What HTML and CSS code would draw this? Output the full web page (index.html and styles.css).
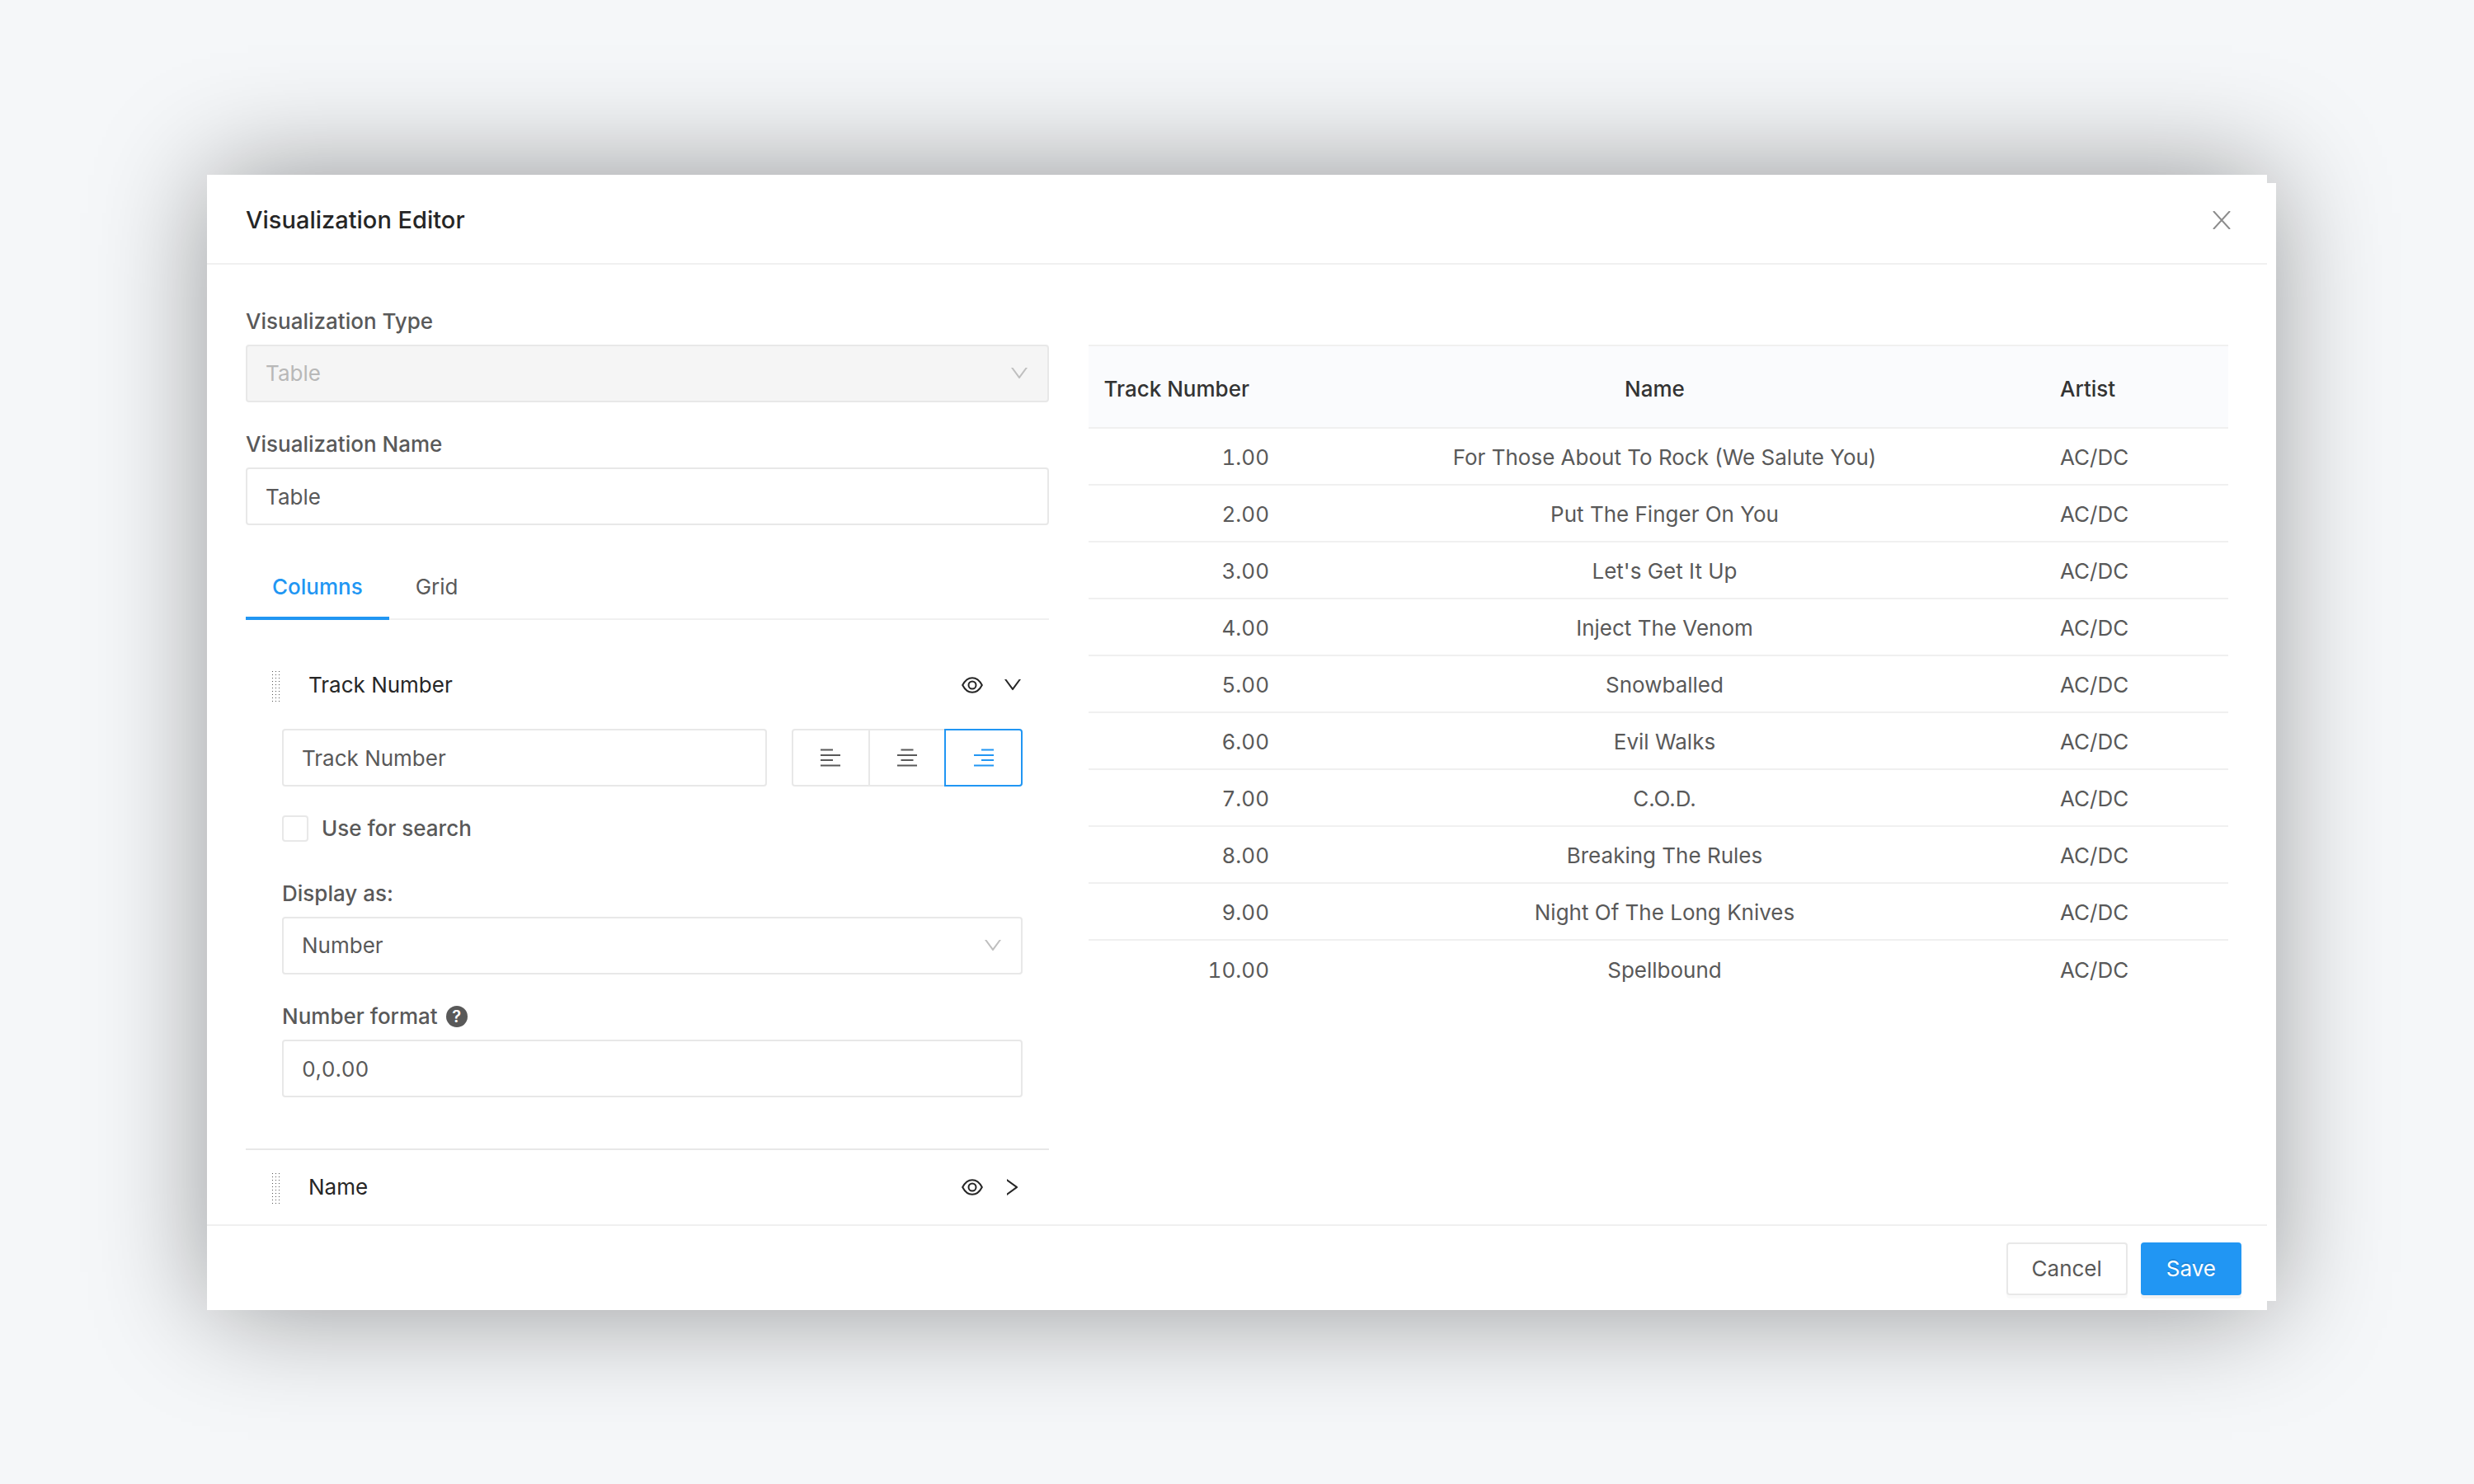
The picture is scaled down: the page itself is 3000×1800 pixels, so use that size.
FILE: index.html
```html
<!DOCTYPE html>
<html lang="en">
<head>
<meta charset="utf-8">
<title>Visualization Editor</title>
<link rel="stylesheet" href="styles.css">
</head>
<body>
<svg class="sprite" aria-hidden="true">
  <symbol id="i-eye" viewBox="0 0 26 20"><path d="M1.200 10C4.200 4.200 8.300 1.200 13 1.200S21.800 4.200 24.800 10C21.800 15.800 17.700 18.800 13 18.800S4.200 15.800 1.200 10Z" fill="none" stroke="currentColor" stroke-width="2"/><circle cx="13" cy="10" r="4.500" fill="none" stroke="currentColor" stroke-width="2"/></symbol>
  <symbol id="i-down" viewBox="0 0 20 14"><path d="M0 0H2.400L10 10.300L17.600 0H20L10.700 12.800Q10 13.600 9.300 12.800Z" fill="currentColor"/></symbol>
  <symbol id="i-right" viewBox="0 0 14 20"><path d="M0 0V2.400L10.300 10L0 17.600V20L12.800 10.700Q13.600 10 12.800 9.300Z" fill="currentColor"/></symbol>
  <symbol id="i-close" viewBox="0 0 22 22"><path d="M1 0L21 22M21 0L1 22" fill="none" stroke="currentColor" stroke-width="2"/></symbol>
</svg>
<main class="modal" role="dialog" aria-labelledby="title">
  <header class="modal-header">
    <h1 id="title">Visualization Editor</h1>
    <button class="icon-button close" aria-label="Close"><svg width="22" height="22"><use href="#i-close"/></svg></button>
  </header>
  <div class="modal-body">
    <form class="settings">
      <div class="field">
        <label for="vtype">Visualization Type</label>
        <div class="select"><select id="vtype" disabled><option>Table</option></select><svg width="20" height="14"><use href="#i-down"/></svg></div>
      </div>
      <div class="field">
        <label for="vname">Visualization Name</label>
        <input class="text" id="vname" type="text" value="Table">
      </div>
      <div class="tabs" role="tablist">
        <button type="button" class="tab active" role="tab" aria-selected="true">Columns</button>
        <button type="button" class="tab" role="tab" aria-selected="false">Grid</button>
      </div>
      <section class="column">
        <div class="column-header">
          <span class="drag"></span>
          <span class="column-name">Track Number</span>
          <button type="button" class="icon-button" aria-label="Toggle visibility"><svg width="26" height="20"><use href="#i-eye"/></svg></button>
          <button type="button" class="icon-button arrow" aria-label="Collapse"><svg width="20" height="14"><use href="#i-down"/></svg></button>
        </div>
        <div class="column-content">
          <div class="title-row">
            <input class="text" type="text" value="Track Number" aria-label="Column title">
            <div class="align-group">
              <button type="button" aria-label="Align left"><svg width="24" height="22" viewBox="0 0 24 22"><path d="M0 1.500H15M0 8H24M0 14H15M0 20.500H24"/></svg></button>
              <button type="button" aria-label="Align center"><svg width="24" height="22" viewBox="0 0 24 22"><path d="M4.500 1.500H19.500M0 8H24M4.500 14H19.500M0 20.500H24"/></svg></button>
              <button type="button" class="active" aria-label="Align right"><svg width="24" height="22" viewBox="0 0 24 22"><path d="M9 1.500H24M0 8H24M9 14H24M0 20.500H24"/></svg></button>
            </div>
          </div>
          <label class="check"><input type="checkbox">Use for search</label>
          <div class="field">
            <label for="display">Display as:</label>
            <div class="select"><select id="display"><option>Number</option></select><svg width="20" height="14"><use href="#i-down"/></svg></div>
          </div>
          <div class="field">
            <label for="format">Number format <span class="help">?</span></label>
            <input class="text" id="format" type="text" value="0,0.00">
          </div>
        </div>
      </section>
      <section class="column">
        <div class="column-header">
          <span class="drag"></span>
          <span class="column-name">Name</span>
          <button type="button" class="icon-button" aria-label="Toggle visibility"><svg width="26" height="20"><use href="#i-eye"/></svg></button>
          <button type="button" class="icon-button arrow" aria-label="Expand"><svg width="14" height="20"><use href="#i-right"/></svg></button>
        </div>
      </section>
    </form>
    <div class="preview">
      <table>
        <thead><tr><th class="num">Track Number</th><th class="name">Name</th><th class="artist">Artist</th></tr></thead>
        <tbody>
          <tr><td>1.00</td><td>For Those About To Rock (We Salute You)</td><td>AC/DC</td></tr>
          <tr><td>2.00</td><td>Put The Finger On You</td><td>AC/DC</td></tr>
          <tr><td>3.00</td><td>Let's Get It Up</td><td>AC/DC</td></tr>
          <tr><td>4.00</td><td>Inject The Venom</td><td>AC/DC</td></tr>
          <tr><td>5.00</td><td>Snowballed</td><td>AC/DC</td></tr>
          <tr><td>6.00</td><td>Evil Walks</td><td>AC/DC</td></tr>
          <tr><td>7.00</td><td>C.O.D.</td><td>AC/DC</td></tr>
          <tr><td>8.00</td><td>Breaking The Rules</td><td>AC/DC</td></tr>
          <tr><td>9.00</td><td>Night Of The Long Knives</td><td>AC/DC</td></tr>
          <tr><td>10.00</td><td>Spellbound</td><td>AC/DC</td></tr>
        </tbody>
      </table>
    </div>
  </div>
  <footer class="modal-footer">
    <button class="btn">Cancel</button>
    <button class="btn primary">Save</button>
  </footer>
</main>
</body>
</html>
```
FILE: styles.css
```css
*, *::before, *::after { box-sizing: border-box; }

body {
  margin: 0;
  min-height: 100vh;
  padding: 212px 240px 211px 251px;
  background: #f5f7f9;
  color: #595959;
  font: 26px/38px Inter, "Liberation Sans", sans-serif;
}

button, input, select { font: inherit; color: inherit; margin: 0; }
button { background: none; border: 0; padding: 0; }
svg { display: block; }
.sprite { position: absolute; width: 0; height: 0; }

.modal {
  position: relative;
  display: flex;
  flex-direction: column;
  margin-right: 11px;
  background: #fff;
  box-shadow: 4px 0 130px rgba(0, 0, 0, .4);
}

/* narrow strip along the right edge of the dialog */
.modal::after {
  content: "";
  position: absolute;
  top: 10px;
  bottom: 11px;
  left: 100%;
  width: 11px;
  background: #fff;
}

.modal-header {
  display: flex;
  align-items: center;
  justify-content: space-between;
  height: 109px;
  padding: 2px 44px 0 47px;
  border-bottom: 2px solid #f0f0f0;
}

h1 { margin: 0; font-size: 29px; font-weight: 500; color: #262626; }
.close { color: #8c8c8c; }

.modal-body {
  display: flex;
  align-items: flex-start;
  gap: 48px;
  padding: 48px 47px 0;
}

.settings { flex: 974; min-width: 0; }
.preview { flex: 1382; min-width: 0; padding-top: 49px; }

.field { margin-bottom: 30px; }
.field label {
  display: flex;
  align-items: center;
  gap: 10px;
  padding: 2px 0 9px;
  font-weight: 500;
}

.text, .select select {
  display: block;
  width: 100%;
  height: 70px;
  padding: 0 22px;
  border: 2px solid #e8e8e8;
  border-radius: 4px;
  background: #fff;
  outline: 0;
}
.select { position: relative; color: #595959; }
.select select { appearance: none; opacity: 1; }
.select select:disabled { background: #f5f5f5; color: #b8b8b8; }
.select svg {
  position: absolute;
  right: 26px;
  top: 28px;
  color: #bfbfbf;
  pointer-events: none;
}

.tabs {
  display: flex;
  margin-top: 34px;
  border-bottom: 2px solid #f0f0f0;
}
.tab { height: 81px; padding: 4px 32px 0; margin-bottom: -2px; border-bottom: 4px solid transparent; }
.tab.active { color: #2196f3; font-weight: 500; border-color: #2196f3; }

.column { border-top: 2px solid #e8e8e8; }
.tabs + .column { margin-top: 32px; border-color: transparent; }
.column-header {
  display: flex;
  align-items: center;
  height: 90px;
  padding: 0 34px 0 32px;
  color: #262626;
}
.drag {
  width: 12px;
  height: 40px;
  margin: 6px 32px 0 0;
  background:
    repeating-linear-gradient(90deg, transparent 0 1px, #fff 1px 4px),
    repeating-linear-gradient(transparent 0 1px, #fff 1px 4px),
    #555;
}
.column-name { flex: 1; }
.arrow { display: flex; justify-content: center; width: 20px; margin-left: 26px; }

.column-content { padding: 8px 32px 32px 44px; }
.title-row { display: grid; grid-template-columns: 588fr 280fr; gap: 30px; }
.align-group { display: flex; }
.align-group button {
  display: flex;
  flex: 1;
  align-items: center;
  justify-content: center;
  height: 70px;
  border: 2px solid #e8e8e8;
}
.align-group button + button { margin-left: -2px; }
.align-group button:first-child { border-radius: 4px 0 0 4px; }
.align-group button:last-child { border-radius: 0 4px 4px 0; }
.align-group .active { border-color: #2196f3; color: #2196f3; }
.align-group path { stroke: currentColor; stroke-width: 2; }

.check {
  display: flex;
  align-items: center;
  gap: 16px;
  margin: 32px 0 39px;
  font-weight: 500;
}
.check input {
  appearance: none;
  width: 32px;
  height: 32px;
  border: 2px solid #e8e8e8;
  border-radius: 4px;
  background: #fff;
}

.help {
  width: 26px;
  height: 26px;
  border-radius: 50%;
  background: #595959;
  color: #fff;
  font-size: 20px;
  font-weight: 600;
  line-height: 26px;
  text-align: center;
}

table { width: 100%; border-collapse: separate; border-spacing: 0; table-layout: fixed; }
th {
  height: 102px;
  padding: 6px 44px 0 20px;
  border: solid #f0f0f0;
  border-width: 2px 0;
  background: #fafbfd;
  color: #333;
  font-weight: 500;
}
.num { width: 239px; text-align: right; padding-left: 0; }
.artist { width: 224px; text-align: left; }
td { height: 69px; padding: 2px 20px 0; border-bottom: 2px solid #f0f0f0; text-align: center; }
td:first-child { text-align: right; }
td:first-child, #format { font-variant-numeric: tabular-nums; }
td:last-child { text-align: left; }
tbody tr:last-child td { border-bottom: 0; }

.modal-footer {
  display: flex;
  justify-content: flex-end;
  gap: 16px;
  padding: 20px 31px 18px;
  border-top: 2px solid #f0f0f0;
}
.btn {
  height: 64px;
  padding: 0 29px;
  border: 2px solid #e8e8e8;
  border-radius: 4px;
  background: #fff;
  box-shadow: 0 4px 0 rgba(0, 0, 0, .02);
}
.btn.primary {
  border-color: #2196f3;
  background: #2196f3;
  color: #fff;
  text-shadow: 0 -2px 0 rgba(0, 0, 0, .12);
  box-shadow: 0 4px 0 rgba(0, 0, 0, .05);
}
```
